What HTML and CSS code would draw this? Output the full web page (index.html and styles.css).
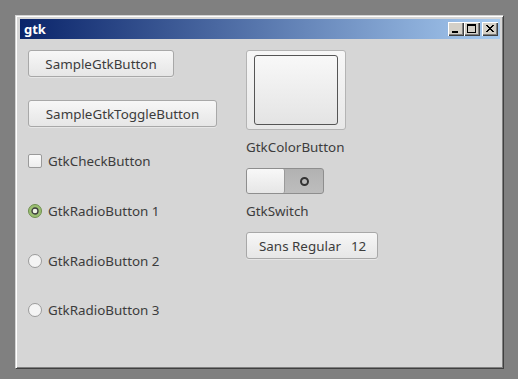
FILE: index.html
```html
<!DOCTYPE html>
<html lang="en">
<head>
    <meta charset="UTF-8">
    <title>gtk</title>
    <link rel="stylesheet" href="styles.css">
</head>
<body>
    <div class="window">
        <div class="titlebar">
            <span class="title">gtk</span>
            <div class="controls">
                <span class="ctl"><svg width="16" height="14" viewBox="0 0 16 14"><rect x="4" y="9" width="6" height="2" fill="#000"/></svg></span>
                <span class="ctl"><svg width="16" height="14" viewBox="0 0 16 14"><rect x="3.5" y="2.5" width="8" height="8" fill="none" stroke="#000"/><rect x="3" y="2" width="9" height="2" fill="#000"/></svg></span>
                <span class="ctl close"><svg width="16" height="14" viewBox="0 0 16 14"><path d="M4 3 L11 10 M5 3 L12 10 M11 3 L4 10 M12 3 L5 10" stroke="#000" stroke-width="1"/></svg></span>
            </div>
        </div>

        <div class="client">
            <div class="col col-left">
                <button class="btn btn-sample">SampleGtkButton</button>
                <button class="btn btn-toggle">SampleGtkToggleButton</button>
                <div class="row row-check"><span class="check"></span>GtkCheckButton</div>
                <div class="row row-radio first">
                    <svg class="radio" width="14" height="14" viewBox="0 0 14 14">
                        <circle cx="7" cy="7" r="6.5" fill="#9bbf72" stroke="#6f8f4e"/>
                        <circle cx="7" cy="7" r="3" fill="#eef3e6" stroke="#3c3c3c" stroke-width="1.3"/>
                    </svg>
                    GtkRadioButton 1
                </div>
                <div class="row row-radio">
                    <svg class="radio" width="14" height="14" viewBox="0 0 14 14">
                        <circle cx="7" cy="7" r="6.5" fill="#f4f4f4" stroke="#9a9a9a"/>
                    </svg>
                    GtkRadioButton 2
                </div>
                <div class="row row-radio">
                    <svg class="radio" width="14" height="14" viewBox="0 0 14 14">
                        <circle cx="7" cy="7" r="6.5" fill="#f4f4f4" stroke="#9a9a9a"/>
                    </svg>
                    GtkRadioButton 3
                </div>
            </div>

            <div class="col col-right">
                <button class="color-btn"><span class="swatch"></span></button>
                <div class="caption">GtkColorButton</div>
                <div class="switch">
                    <span class="slider"></span>
                    <span class="off-mark"></span>
                </div>
                <div class="caption">GtkSwitch</div>
                <button class="btn font-btn"><span>Sans Regular</span><span>12</span></button>
            </div>
        </div>
    </div>
</body>
</html>
```

FILE: styles.css
```css
/* desktop */
body {
    margin: 0;
    padding: 15px;
    background-color: #808080;
    font-family: 'Noto Sans', 'DejaVu Sans', sans-serif;
    font-size: 13.4px;
    color: #3c3c3c;
}

/* window frame, classic style */
.window {
    width: 489px;
    height: 354px;
    box-sizing: border-box;
    background-color: #d6d6d6;
    border-top: 1px solid #d4d4d4;
    border-left: 1px solid #d4d4d4;
    border-right: 1px solid #404040;
    border-bottom: 1px solid #404040;
    box-shadow: inset 1px 1px 0 #ffffff, inset -1px -1px 0 #808080;
    padding: 3px 3px 3px 4px;
    display: flex;
    flex-direction: column;
}

.titlebar {
    height: 20px;
    background: linear-gradient(to right, #0a246a, #a6caf0);
    display: flex;
    align-items: center;
    justify-content: space-between;
    padding: 0 2px 0 4px;
}

.title {
    color: #ffffff;
    font-weight: bold;
    font-size: 13px;
    line-height: 20px;
}

.controls {
    display: flex;
}

.ctl {
    width: 16px;
    height: 14px;
    box-sizing: border-box;
    background-color: #d4d0c8;
    box-shadow: inset 1px 1px 0 #ffffff, inset -1px -1px 0 #404040, inset -2px -2px 0 #808080;
    display: block;
}

.ctl svg {
    display: block;
}

.ctl.close {
    margin-left: 2px;
}

/* client area */
.client {
    flex: 1;
    display: grid;
    grid-template-columns: 218px auto;
    padding: 11px 0 0 8px;
}

.col {
    display: flex;
    flex-direction: column;
    align-items: flex-start;
}

.btn {
    font-family: inherit;
    font-size: 13.4px;
    color: #3c3c3c;
    height: 27px;
    box-sizing: border-box;
    border: 1px solid #a8a8a8;
    border-radius: 3px;
    background: linear-gradient(#f7f7f7, #e6e6e6);
    box-shadow: 0 1px 0 rgba(255, 255, 255, 0.4);
    padding: 0 14px;
    white-space: nowrap;
    cursor: pointer;
}

.btn-sample {
    width: 146px;
}

.btn-toggle {
    width: 189px;
    margin-top: 23px;
}

.row {
    height: 24px;
    display: flex;
    align-items: center;
    gap: 6px;
}

.row-check {
    margin-top: 22px;
}

.row-radio {
    margin-top: 26px;
}

.row-radio:last-child {
    margin-top: 25px;
}

.check {
    width: 14px;
    height: 14px;
    box-sizing: border-box;
    border: 1px solid #9a9a9a;
    border-radius: 2px;
    background: linear-gradient(#fbfbfb, #ededed);
}

.radio {
    display: block;
}

/* right column */
.color-btn {
    width: 100px;
    height: 80px;
    box-sizing: border-box;
    border: 1px solid #b4b4b4;
    border-radius: 3px;
    background: linear-gradient(#f7f7f7, #e8e8e8);
    padding: 4px 7px 4px 7px;
    display: flex;
    cursor: pointer;
}

.swatch {
    flex: 1;
    border: 1px solid #555555;
    border-radius: 3px;
    background: linear-gradient(#f8f8f8, #e4e4e4);
}

.caption {
    line-height: 20px;
    margin-top: 7px;
}

.switch {
    width: 78px;
    height: 26px;
    box-sizing: border-box;
    margin-top: 11px;
    border: 1px solid #8e8e8e;
    border-radius: 3px;
    background: linear-gradient(#b2b2b2, #bdbdbd);
    display: flex;
    align-items: center;
}

.slider {
    width: 38px;
    height: 24px;
    box-sizing: border-box;
    border-right: 1px solid #9a9a9a;
    border-radius: 2px;
    background: linear-gradient(#f8f8f8, #e6e6e6);
}

.off-mark {
    width: 9px;
    height: 9px;
    box-sizing: border-box;
    border: 2px solid #333333;
    border-radius: 50%;
    margin-left: 15px;
}

.font-btn {
    width: 132px;
    margin-top: 11px;
    padding: 0 8px 0 12px;
    display: flex;
    align-items: center;
    gap: 10px;
}
```
